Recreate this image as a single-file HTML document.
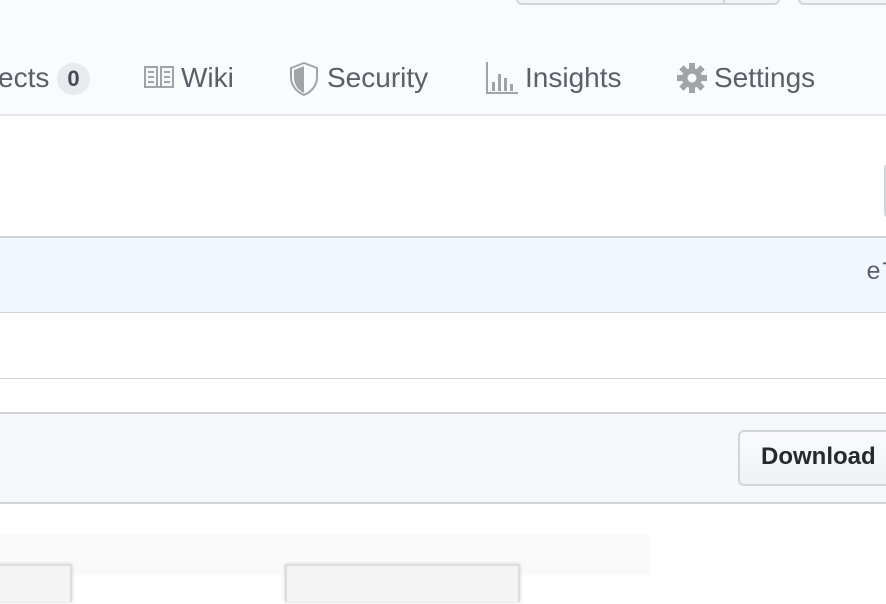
<!DOCTYPE html>
<html style="overflow:hidden;width:886px;height:604px"><head><style>
body{margin:0;width:886px;height:604px;overflow:hidden;background:#fff;font-family:"Liberation Sans",sans-serif;position:relative}
.a{position:absolute}
.tab{position:absolute;top:60px;font-size:28px;color:#586069;line-height:36px}
</style></head><body>
<div class="a" style="left:0;top:0;width:886px;height:114px;background:#fafbfc;border-bottom:2px solid #e1e4e8"></div>
<div class="a" style="left:516px;top:-10px;width:260px;height:11px;border:2px solid #d1d5da;border-radius:6px;background:#f3f4f6"></div>
<div class="a" style="left:723px;top:-10px;width:2px;height:13px;background:#d1d5da"></div>
<div class="a" style="left:798px;top:-10px;width:100px;height:11px;border:2px solid #d1d5da;border-radius:6px;background:#f3f4f6"></div>
<div class="tab" style="left:-2px">ects</div>
<div class="a" style="left:57px;top:63px;width:33px;height:32px;border-radius:16px;background:#e8eaed;color:#444d56;font-weight:bold;font-size:22px;text-align:center;line-height:32px">0</div>
<svg class="a" style="left:144px;top:66px" width="30" height="24" viewBox="0 0 30 24" fill="none" stroke="#a0a4a8" stroke-width="2"><rect x="1" y="1" width="12" height="20"/><rect x="17" y="1" width="12" height="20"/><path d="M13 21h4M4 6h6M4 11h6M4 16h6M20 6h6M20 11h6M20 16h6"/></svg>
<div class="tab" style="left:181px">Wiki</div>
<svg class="a" style="left:289px;top:62px" width="30" height="34" viewBox="0 0 30 34"><path d="M15 1L2 6v9c0 9 6 15 13 18 7-3 13-9 13-18V6z" fill="none" stroke="#a0a4a8" stroke-width="2"/><path d="M15 4v27c-6-3-10-8-10-16V8z" fill="#a0a4a8"/></svg>
<div class="tab" style="left:327px">Security</div>
<svg class="a" style="left:486px;top:62px" width="32" height="32" viewBox="0 0 32 32" fill="#a0a4a8"><rect x="0" y="0" width="2" height="32"/><rect x="0" y="30" width="32" height="2"/><rect x="6" y="20" width="3" height="9"/><rect x="12" y="12" width="3" height="17"/><rect x="18" y="16" width="3" height="13"/><rect x="24" y="22" width="3" height="7"/></svg>
<div class="tab" style="left:525px">Insights</div>
<svg class="a" style="left:677px;top:63px" width="30" height="30" viewBox="0 0 30 30"><g fill="#a0a4a8"><circle cx="15" cy="15" r="10"/><rect x="12" y="0" width="6" height="30"/><rect x="12" y="0" width="6" height="30" transform="rotate(45 15 15)"/><rect x="12" y="0" width="6" height="30" transform="rotate(90 15 15)"/><rect x="12" y="0" width="6" height="30" transform="rotate(135 15 15)"/></g><circle cx="15" cy="15" r="4.5" fill="#fafbfc"/></svg>
<div class="tab" style="left:714px">Settings</div>
<div class="a" style="left:884px;top:163px;width:10px;height:52px;border:2px solid #d1d5da;border-radius:6px;background:#f6f8fa"></div>
<div class="a" style="left:0;top:236px;width:886px;height:74px;background:#f1f8ff;border-top:2px solid #d1d5da;border-bottom:1px solid #d1d5da"></div>
<div class="a" style="left:866px;top:257px;font-family:'Liberation Mono',monospace;font-size:25px;color:#586069;line-height:32px">e7</div>
<div class="a" style="left:0;top:378px;width:886px;height:1px;background:#d1d5da"></div>
<div class="a" style="left:0;top:412px;width:886px;height:88px;background:#f6f8fa;border-top:2px solid #d1d5da;border-bottom:2px solid #d1d5da"></div>
<div class="a" style="left:738px;top:430px;width:170px;height:52px;border:2px solid #d1d5da;border-radius:6px;background:linear-gradient(#fafbfc,#eff3f6)"></div>
<div class="a" style="left:761px;top:442px;font-size:24px;font-weight:bold;color:#24292e;line-height:30px">Download</div>
<div class="a" style="left:0;top:535px;width:650px;height:40px;background:#fafafa"></div>
<div class="a" style="left:-2px;top:564px;width:70px;height:36px;background:#f4f4f4;border:2px solid #ddd;border-bottom:none;box-shadow:0 0 3px #ccc"></div>
<div class="a" style="left:285px;top:564px;width:231px;height:36px;background:#f4f4f4;border:2px solid #ddd;border-bottom:none;box-shadow:0 0 3px #ccc"></div>
</body></html>
